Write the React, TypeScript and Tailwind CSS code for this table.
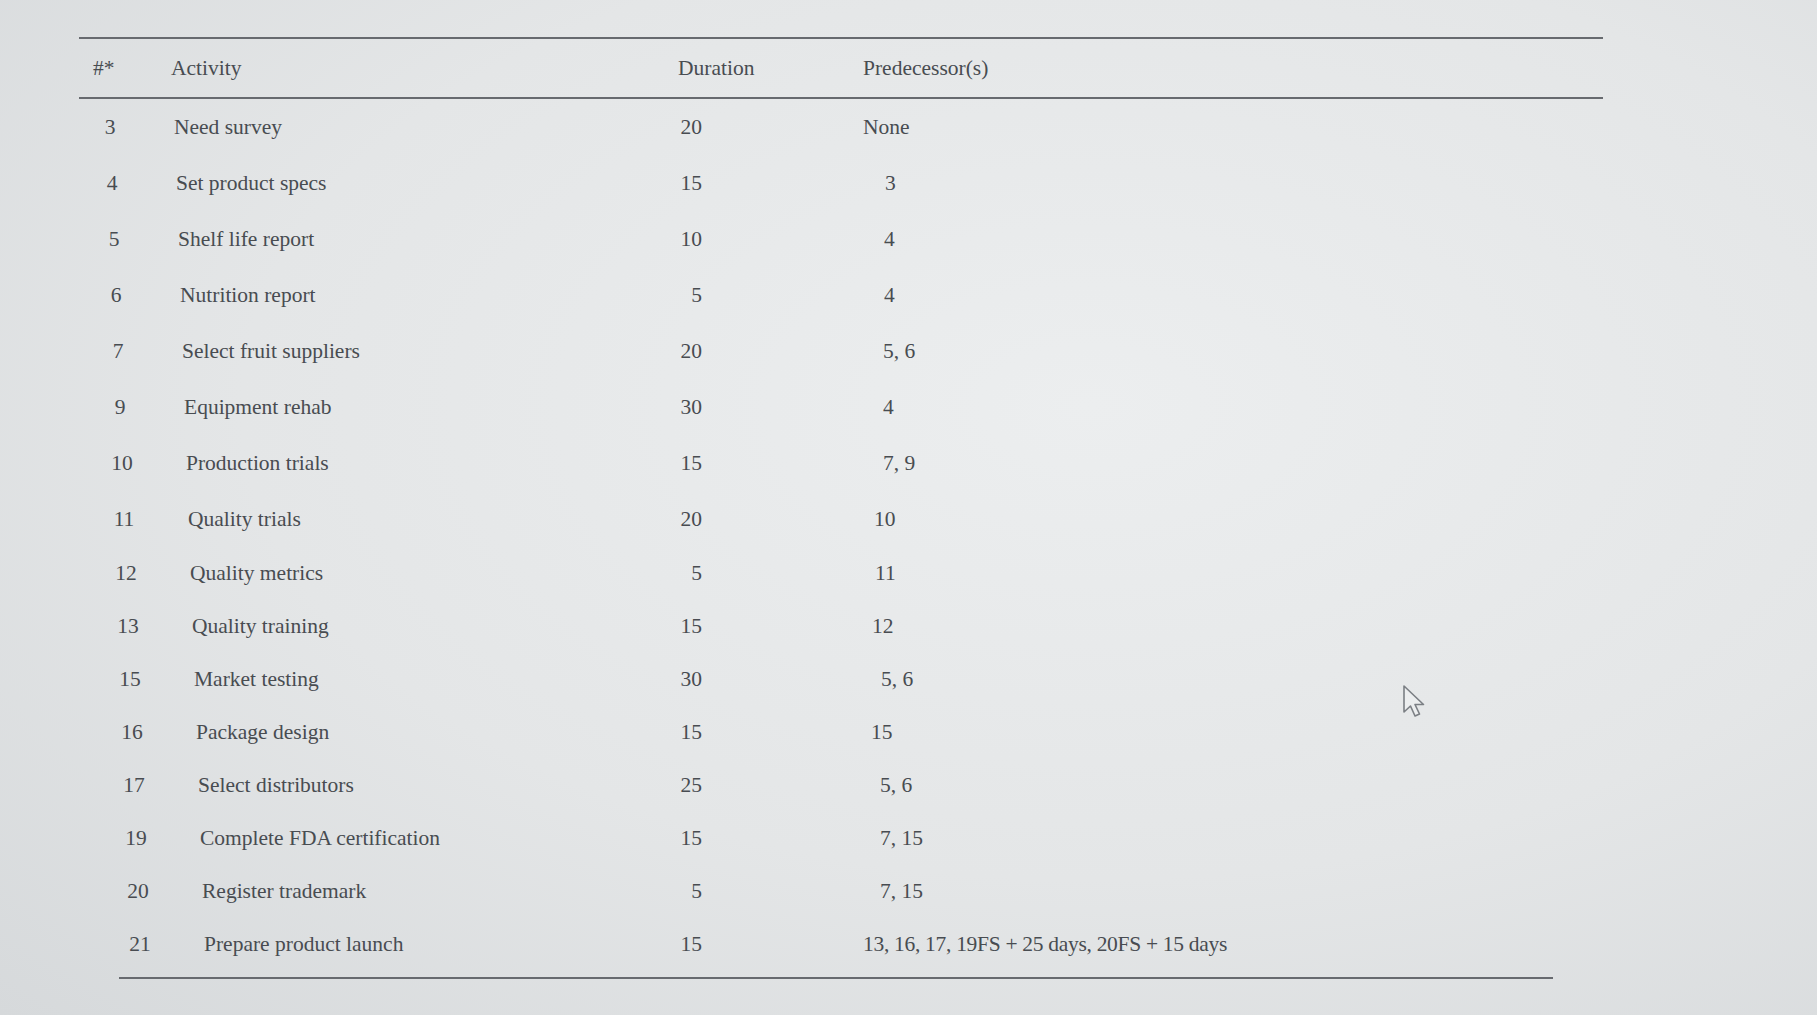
import React from 'react';

interface Row {
  id: number;
  activity: string;
  duration: number;
  pred: string;
  predPad: string;
}

const rows: Row[] = [
  { id: 3, activity: 'Need survey', duration: 20, pred: 'None', predPad: 'pl-0' },
  { id: 4, activity: 'Set product specs', duration: 15, pred: '3', predPad: 'pl-[22px]' },
  { id: 5, activity: 'Shelf life report', duration: 10, pred: '4', predPad: 'pl-[21px]' },
  { id: 6, activity: 'Nutrition report', duration: 5, pred: '4', predPad: 'pl-[21px]' },
  { id: 7, activity: 'Select fruit suppliers', duration: 20, pred: '5, 6', predPad: 'pl-[20px]' },
  { id: 9, activity: 'Equipment rehab', duration: 30, pred: '4', predPad: 'pl-[20px]' },
  { id: 10, activity: 'Production trials', duration: 15, pred: '7, 9', predPad: 'pl-[20px]' },
  { id: 11, activity: 'Quality trials', duration: 20, pred: '10', predPad: 'pl-[11px]' },
  { id: 12, activity: 'Quality metrics', duration: 5, pred: '11', predPad: 'pl-[12px]' },
  { id: 13, activity: 'Quality training', duration: 15, pred: '12', predPad: 'pl-[9px]' },
  { id: 15, activity: 'Market testing', duration: 30, pred: '5, 6', predPad: 'pl-[18px]' },
  { id: 16, activity: 'Package design', duration: 15, pred: '15', predPad: 'pl-[8px]' },
  { id: 17, activity: 'Select distributors', duration: 25, pred: '5, 6', predPad: 'pl-[17px]' },
  { id: 19, activity: 'Complete FDA certification', duration: 15, pred: '7, 15', predPad: 'pl-[17px]' },
  { id: 20, activity: 'Register trademark', duration: 5, pred: '7, 15', predPad: 'pl-[17px]' },
  { id: 21, activity: 'Prepare product launch', duration: 15, pred: '13, 16, 17, 19FS + 25 days, 20FS + 15 days', predPad: 'pl-0 tracking-[-0.3px]' },
];

const Cursor = () => (
  <svg width="26" height="38" viewBox="0 0 26 38" className="absolute left-[1402px] top-[684px]">
    <path
      d="M2 2 L2 28 L8.5 22 L13 32 L17.5 30 L13 20.5 L21.5 20.5 Z"
      fill="#eceeef"
      stroke="#7b7f84"
      strokeWidth="1.6"
      strokeLinejoin="round"
    />
  </svg>
);

export default function App() {
  return (
    <div className="relative h-[1015px] w-full overflow-hidden bg-[radial-gradient(ellipse_at_60%_40%,#eceeef_0%,#e4e6e7_55%,#d6d9db_100%)] font-['Liberation_Serif',serif] text-[21.5px] text-[#484c51]">
      <div className="pl-[79px] pt-[37px]">
        <div className="w-[1524px]">
          {/* header */}
          <div className="flex h-[62px] items-center border-y-2 border-[#676a6f]">
            <div className="flex w-[599px]">
              <div className="w-[92px] pl-[14px]">#*</div>
              <div>Activity</div>
            </div>
            <div className="w-[185px]">Duration</div>
            <div>Predecessor(s)</div>
          </div>

          {/* rows: upper rows sit a little further apart, as in the photo */}
          {rows.map((r, i) => (
            <div key={r.id} className={`flex items-center ${i < 8 ? 'h-[56px]' : 'h-[53px]'}`}>
              <div className="flex w-[599px]" style={{ paddingLeft: i * 2 }}>
                <div className="w-[62px] text-center">{r.id}</div>
                <div className="pl-[33px]">{r.activity}</div>
              </div>
              <div className="w-[185px]">
                <span className="inline-block w-[24px] text-right">{r.duration}</span>
              </div>
              <div className={r.predPad}>{r.pred}</div>
            </div>
          ))}
        </div>
        <div className="ml-[40px] mt-[6px] h-[2px] w-[1434px] bg-[#676a6f]" />
      </div>
      <Cursor />
    </div>
  );
}
